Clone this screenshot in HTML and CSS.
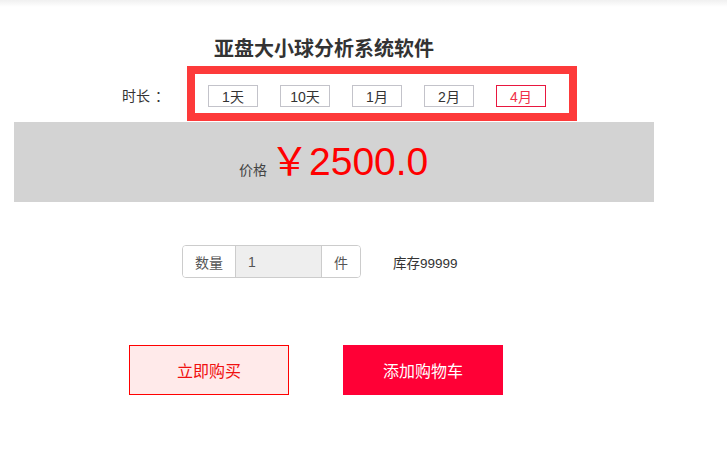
FILE: index.html
```html
<!DOCTYPE html>
<html lang="zh-CN">
<head>
<meta charset="utf-8">
<title>亚盘大小球分析系统软件</title>
<link rel="stylesheet" href="styles.css">
</head>
<body>
<div class="topbar"></div>
<div class="page">
  <h1 class="title">亚盘大小球分析系统软件</h1>
  <div class="duration-row">
    <span class="label">时长<span class="colon">：</span></span>
    <div class="options">
      <span class="opt">1天</span>
      <span class="opt">10天</span>
      <span class="opt">1月</span>
      <span class="opt">2月</span>
      <span class="opt active">4月</span>
    </div>
  </div>
  <div class="price-band">
    <span class="price-label">价格</span>
    <span class="price"><span class="yen">￥</span>2500.0</span>
  </div>
  <div class="qty-row">
    <div class="qty-group">
      <span class="addon">数量</span>
      <span class="qty-input">1</span>
      <span class="addon unit">件</span>
    </div>
    <span class="stock">库存99999</span>
  </div>
  <div class="actions">
    <span class="btn buy">立即购买</span>
    <span class="btn cart">添加购物车</span>
  </div>
</div>
</body>
</html>
```

FILE: styles.css
```css
* { box-sizing: border-box; }
html, body { margin: 0; padding: 0; background: #fff; }
body {
  font-family: "Liberation Sans", "Noto Sans CJK SC", sans-serif;
  color: #333;
  font-size: 14px;
  width: 727px;
  height: 455px;
  overflow: hidden;
}
.topbar {
  height: 7px;
  background: linear-gradient(#f0f0f0, #ffffff);
}
.page {
  padding-left: 14px;
  width: 654px;
}
.title {
  margin: 28px 0 0 200px;
  font-size: 20px;
  line-height: 28px;
  font-weight: bold;
  color: #333;
}
.duration-row {
  margin-top: 3px;
  display: flex;
  align-items: flex-start;
  padding-left: 108px;
}
.label {
  width: 65px;
  padding-top: 22px;
  line-height: 16px;
  font-size: 14px;
  color: #333;
}
.colon {
  margin-left: 5px;
}
.options {
  display: flex;
  gap: 22px;
  border: 8px solid #fd3a3a;
  padding: 11px 23px 6px 13px;
}
.opt {
  display: flex;
  align-items: center;
  justify-content: center;
  width: 50px;
  height: 22px;
  border: 1px solid #c3c3ca;
  font-size: 14px;
  color: #333;
}
.opt.active {
  border-color: #e8173f;
  color: #f0304a;
}
.price-band {
  margin-top: 1px;
  height: 80px;
  width: 640px;
  background: #d3d3d3;
  display: flex;
  align-items: baseline;
  padding-left: 225px;
  line-height: 72px;
}
.price-label {
  font-size: 14px;
  color: #444;
  margin-right: 3px;
}
.price {
  font-size: 39px;
  color: #ff0000;
}
.yen {
  font-family: "Noto Sans CJK SC", sans-serif;
}
.qty-row {
  margin-top: 43px;
  display: flex;
  align-items: center;
  padding-left: 168px;
}
.qty-group {
  display: flex;
  height: 33px;
  border: 1px solid #ccc;
  border-radius: 4px;
  overflow: hidden;
}
.addon {
  display: flex;
  align-items: center;
  padding: 0 12px;
  color: #555;
  background: #fff;
  font-size: 14px;
}
.qty-input {
  display: flex;
  align-items: center;
  width: 87px;
  padding-left: 12px;
  background: #eee;
  border-left: 1px solid #ccc;
  border-right: 1px solid #ccc;
  color: #555;
}
.stock {
  margin-left: 32px;
  font-size: 13.5px;
  color: #333;
}
.actions {
  margin-top: 67px;
  display: flex;
  gap: 54px;
  padding-left: 115px;
}
.btn {
  display: flex;
  align-items: center;
  justify-content: center;
  width: 160px;
  height: 50px;
  font-size: 16px;
}
.buy {
  background: #ffeaea;
  border: 1px solid #ff0000;
  color: #f01010;
}
.cart {
  background: #ff0036;
  color: #fff;
}
```
